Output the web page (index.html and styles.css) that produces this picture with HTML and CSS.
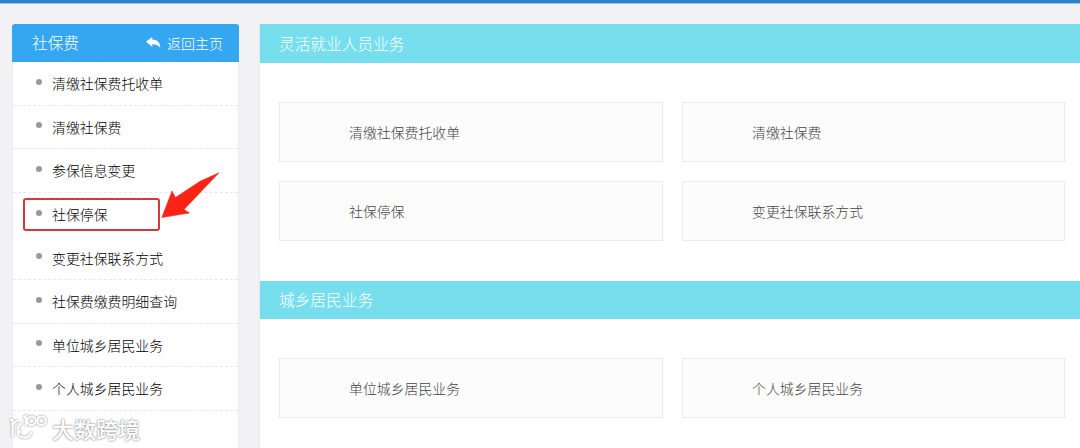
FILE: index.html
```html
<!DOCTYPE html>
<html lang="zh-CN">
  <head>
    <meta charset="UTF-8" />
    <meta name="viewport" content="width=device-width, initial-scale=1.0" />
    <title>社保费</title>
    <link rel="stylesheet" href="styles.css">
  </head>
  <body>
    <div class="topbar"></div>
    <div class="container">
      <aside class="sidebar">
        <div class="sidebar-title">
          <span>社保费</span>
          <a href="#" class="back">
            <svg class="back-icon" viewBox="0 0 15 12">
              <path d="M0 4.8 L6.2 0 V2.5 C11.2 2.6 14.2 5.4 14.3 10.8 C12.4 8.2 10 7.2 6.2 7.2 V9.7 Z" fill="#fff" />
            </svg>
            返回主页
          </a>
        </div>
        <ul class="menu">
          <li><a href="#">清缴社保费托收单</a></li>
          <li><a href="#">清缴社保费</a></li>
          <li><a href="#">参保信息变更</a></li>
          <li class="current">
            <a href="#">社保停保</a>
            <span class="mark"></span>
            <svg class="arrow" viewBox="0 0 60 48">
              <path d="M1.8 46.5 L12 20 L15.5 26.5 L40 10.3 L59 1.7 L24 38.5 L29.5 42 Z" fill="#fa2314" stroke="#e0352a" stroke-width="0.6" />
            </svg>
          </li>
          <li><a href="#">变更社保联系方式</a></li>
          <li><a href="#">社保费缴费明细查询</a></li>
          <li><a href="#">单位城乡居民业务</a></li>
          <li><a href="#">个人城乡居民业务</a></li>
        </ul>
      </aside>

      <main class="content">
        <h2>灵活就业人员业务</h2>
        <div class="cards">
          <a href="#" class="card">清缴社保费托收单</a>
          <a href="#" class="card">清缴社保费</a>
          <a href="#" class="card">社保停保</a>
          <a href="#" class="card">变更社保联系方式</a>
        </div>
        <h2>城乡居民业务</h2>
        <div class="cards">
          <a href="#" class="card">单位城乡居民业务</a>
          <a href="#" class="card">个人城乡居民业务</a>
        </div>
      </main>
    </div>

    <div class="watermark">
      <svg class="watermark-logo" viewBox="0 0 40 28">
        <path d="M2 6 H4.5 V23 M4.5 12 Q6 7.5 10 6.5" />
        <path d="M13 9 C9 13 9.5 18 13 18.5 M9.5 17 C10 25 21 26 23.5 18" />
        <path d="M15.5 3.5 L17.8 2 V12" />
        <circle cx="23.5" cy="6.8" r="4.3" />
        <circle cx="33.5" cy="6.8" r="4.3" />
      </svg>
      <span>大数跨境</span>
    </div>
  </body>
</html>
```

FILE: styles.css
```css
* {
  box-sizing: border-box;
}
body {
  margin: 0;
  height: 448px;
  overflow: hidden;
  background-color: #f2f2f4;
  font-family: "Noto Sans CJK SC", sans-serif;
  font-weight: 300;
  font-size: 13.9px;
  color: #000;
}
a {
  color: inherit;
  text-decoration: none;
}
.topbar {
  height: 4px;
  background-color: #2b82c9;
  border-bottom: 1px solid #9dc5e5;
}
.container {
  display: flex;
  align-items: flex-start;
  gap: 21px;
  padding: 20px 0 0 12px;
}

/* left menu */
.sidebar {
  width: 227px;
  height: 430px;
  flex-shrink: 0;
  background-color: #fff;
  border: 1px solid #ebedf0;
  border-top: none;
  border-radius: 4px 4px 0 0;
}
.sidebar-title {
  display: flex;
  justify-content: space-between;
  align-items: center;
  height: 38px;
  margin: 0 -1px;
  padding: 0 16px 1px 20px;
  background-color: #35a7f1;
  border-radius: 3px 3px 0 0;
  color: #fff;
  font-size: 15.7px;
}
.back {
  display: flex;
  align-items: center;
  font-size: 14px;
}
.back-icon {
  width: 15px;
  height: 12px;
  margin-right: 6px;
}
.menu {
  list-style: none;
  margin: 0;
  padding: 0;
}
.menu li {
  position: relative;
  display: flex;
  align-items: center;
  height: 43.6px;
  padding-left: 23px;
  border-bottom: 1px dashed #e6e8ea;
}
.menu li::before {
  content: "";
  width: 6px;
  height: 6px;
  margin: -3px 10px 0 0;
  border-radius: 50%;
  background-color: #999;
}
.menu .current {
  border-bottom-color: transparent;
}
.mark {
  position: absolute;
  left: 10px;
  top: 5px;
  width: 137px;
  height: 33px;
  border: 2px solid #d03a3a;
  border-radius: 3px;
}
.arrow {
  position: absolute;
  left: 147px;
  top: -22px;
  width: 60px;
  height: 48px;
}

/* right part */
.content {
  flex: 1;
  height: 430px;
  background-color: #fff;
  border-left: 1px solid #e8eaed;
  margin-left: -1px;
}
.content h2 {
  height: 38px;
  margin: 0;
  padding-left: 19px;
  background-color: #77deee;
  color: #fff;
  font-size: 15.7px;
  font-weight: 300;
  line-height: 37px;
}
.content h2:first-child {
  height: 39px;
  line-height: 39px;
}
.cards {
  display: grid;
  grid-template-columns: 384px 383px;
  grid-auto-rows: 60px;
  gap: 19px;
  padding: 39px 16px 40px 19px;
}
.card {
  display: flex;
  align-items: center;
  padding-left: 69px;
  background-color: #fcfcfc;
  border: 1px solid #ececec;
  color: #444;
}

/* bottom left stamp */
.watermark {
  position: absolute;
  left: 8px;
  top: 410px;
  display: flex;
  align-items: center;
  gap: 4px;
  color: #fff;
  font-size: 22px;
  font-weight: 500;
  line-height: 36px;
  text-shadow: 0 0 2px #999, 0 0 2px #999;
}
.watermark-logo {
  width: 40px;
  height: 28px;
  fill: none;
  stroke: #fff;
  stroke-width: 2.2;
  filter: drop-shadow(0 0 1px #888);
}
```
